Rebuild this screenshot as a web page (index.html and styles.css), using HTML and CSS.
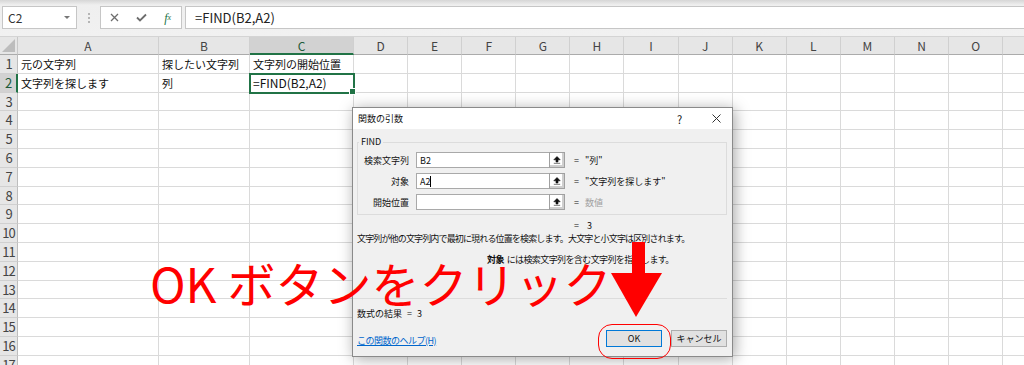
FILE: index.html
```html
<!DOCTYPE html>
<html lang="ja">
<head>
    <meta charset="UTF-8">
    <meta name="viewport" content="width=device-width, initial-scale=1.0">
    <title>関数の引数</title>
    <link rel="stylesheet" href="styles.css">
</head>
<body>
    <div class="app">
        <div class="formula-bar">
            <div class="name-box"><span>C2</span><span class="caret"></span></div>
            <div class="grip"><i></i><i></i><i></i></div>
            <div class="fx-buttons">
                <span class="fx-btn">
                    <svg width="9" height="9" viewBox="0 0 9 9"><path d="M1 1 L8 8 M8 1 L1 8" stroke="#6d6d6d" stroke-width="1.3"/></svg>
                </span>
                <span class="fx-btn">
                    <svg width="11" height="9" viewBox="0 0 11 9"><path d="M1 4.5 L4 7.5 L10 1.5" stroke="#6d6d6d" stroke-width="1.8" fill="none"/></svg>
                </span>
                <span class="fx-btn fx-label">f<sub>x</sub></span>
            </div>
            <div class="formula-input">=FIND(B2,A2)</div>
        </div>

        <div class="sheet" id="sheet"></div>

        <div class="dialog">
            <div class="dialog-title">
                <span class="title-text">関数の引数</span>
                <span class="title-help">?</span>
                <span class="title-close">
                    <svg width="9" height="9" viewBox="0 0 9 9"><path d="M0.5 0.5 L8.5 8.5 M8.5 0.5 L0.5 8.5" stroke="#333" stroke-width="1"/></svg>
                </span>
            </div>
            <div class="dialog-body">
                <fieldset class="args">
                    <legend>FIND</legend>
                    <div class="arg-row">
                        <span class="arg-label">検索文字列</span>
                        <span class="arg-input">B2</span>
                        <span class="ref-btn"><svg width="8" height="8" viewBox="0 0 8 8"><path d="M4 0.5 L0.8 3.8 H3 V6 H5 V3.8 H7.2 Z M0.8 7.3 H7.2" fill="#111" stroke="#111" stroke-width="0.6"/></svg></span>
                        <span class="eq">=</span>
                        <span class="arg-value">"列"</span>
                    </div>
                    <div class="arg-row">
                        <span class="arg-label">対象</span>
                        <span class="arg-input">A2<span class="text-cursor"></span></span>
                        <span class="ref-btn"><svg width="8" height="8" viewBox="0 0 8 8"><path d="M4 0.5 L0.8 3.8 H3 V6 H5 V3.8 H7.2 Z M0.8 7.3 H7.2" fill="#111" stroke="#111" stroke-width="0.6"/></svg></span>
                        <span class="eq">=</span>
                        <span class="arg-value">"文字列を探します"</span>
                    </div>
                    <div class="arg-row">
                        <span class="arg-label">開始位置</span>
                        <span class="arg-input"></span>
                        <span class="ref-btn"><svg width="8" height="8" viewBox="0 0 8 8"><path d="M4 0.5 L0.8 3.8 H3 V6 H5 V3.8 H7.2 Z M0.8 7.3 H7.2" fill="#111" stroke="#111" stroke-width="0.6"/></svg></span>
                        <span class="eq">=</span>
                        <span class="arg-value muted">数値</span>
                    </div>
                </fieldset>
                <div class="func-result"><span class="eq">=</span>3</div>
                <p class="desc">文字列が他の文字列内で最初に現れる位置を検索します。大文字と小文字は区別されます。</p>
                <p class="arg-desc"><b>対象</b>&nbsp;&nbsp;には検索文字列を含む文字列を指定します。</p>
                <div class="separator"></div>
                <div class="formula-result">数式の結果 <span class="eq">=</span> 3</div>
                <div class="dialog-foot">
                    <a class="help-link" href="#">この関数のヘルプ(H)</a>
                    <button class="btn btn-ok">OK</button>
                    <button class="btn">キャンセル</button>
                </div>
            </div>
        </div>

        <div class="note">OK ボタンをクリック</div>
        <svg class="arrow" width="58" height="80" viewBox="0 0 58 80">
            <rect x="24" y="2" width="13" height="32" fill="#ff0000"/>
            <polygon points="3,33 54,33 28,77" fill="#ff0000"/>
        </svg>
        <div class="ring"></div>
    </div>
    <script>
        let sheet = document.getElementById('sheet');
        let letters = 'ABCDEFGHIJKLMNOP'.split('');
        let data = {
            A1: '元の文字列',
            B1: '探したい文字列',
            C1: '文字列の開始位置',
            A2: '文字列を探します',
            B2: '列',
            C2: '=FIND(B2,A2)'
        };

        function addCell(cls, text) {
            let cell = document.createElement('div');
            cell.className = cls;
            if (text) cell.innerText = text;
            sheet.appendChild(cell);
            return cell;
        }

        addCell('corner');
        letters.forEach(function(letter) {
            addCell(letter == 'C' ? 'col-head active' : 'col-head', letter);
        });

        for (let row = 1; row <= 17; row++) {
            addCell(row == 2 ? 'row-head active' : 'row-head', String(row));
            letters.forEach(function(letter) {
                let key = letter + row;
                addCell(key == 'C2' ? 'cell selected' : 'cell', data[key]);
            });
        }
    </script>
</body>
</html>
```

FILE: styles.css
```css
* {
    box-sizing: border-box;
}
body {
    margin: 0;
    font-family: "Noto Sans CJK JP", "Noto Sans", sans-serif;
    background: #fff;
    overflow: hidden;
}
.app {
    position: relative;
    width: 1024px;
    height: 365px;
    overflow: hidden;
}

/* formula bar */
.formula-bar {
    height: 37px;
    display: flex;
    align-items: flex-start;
    padding: 6px 0 0 2px;
    background: linear-gradient(#d6d6d6, #efefef 5px, #f1f1f1);
    border-bottom: 1px solid #d4d4d4;
}
.name-box {
    width: 75px;
    height: 23px;
    display: flex;
    align-items: center;
    justify-content: space-between;
    padding: 0 6px 0 5px;
    background: #fff;
    border: 1px solid #c6c6c6;
    font-size: 12px;
    color: #333;
}
.caret {
    border-left: 3px solid transparent;
    border-right: 3px solid transparent;
    border-top: 3px solid #777;
}
.grip {
    width: 23px;
    height: 23px;
    display: flex;
    flex-direction: column;
    align-items: center;
    justify-content: center;
    gap: 2px;
}
.grip i {
    width: 2px;
    height: 2px;
    background: #b5b5b5;
}
.fx-buttons {
    width: 82px;
    height: 23px;
    display: flex;
    align-items: center;
    background: #fff;
    border: 1px solid #c6c6c6;
}
.fx-btn {
    width: 27px;
    display: flex;
    justify-content: center;
}
.fx-label {
    font-family: "Liberation Serif", serif;
    font-style: italic;
    font-size: 12px;
    color: #217346;
    line-height: 12px;
}
.fx-label sub {
    font-size: 8px;
    vertical-align: -1px;
}
.formula-input {
    flex: 1;
    height: 23px;
    margin-left: 3px;
    padding-left: 9px;
    background: #fff;
    border: 1px solid #c6c6c6;
    border-right: 0;
    font-size: 13px;
    line-height: 21px;
    color: #222;
}

/* sheet */
.sheet {
    display: grid;
    grid-template-columns: 18px 141px 91px 104px repeat(13, 54.1px);
    grid-template-rows: 18px repeat(17, 18.8px);
}
.corner {
    position: relative;
    background: #e6e6e6;
    border-right: 1px solid #c8c8c8;
    border-bottom: 1px solid #ababab;
}
.corner::after {
    content: "";
    position: absolute;
    right: 2px;
    bottom: 2px;
    border-left: 13px solid transparent;
    border-bottom: 13px solid #bdbdbd;
}
.col-head {
    background: #e6e6e6;
    border-right: 1px solid #d0d0d0;
    border-bottom: 1px solid #ababab;
    font-size: 12px;
    line-height: 17px;
    text-align: center;
    color: #444;
}
.col-head.active {
    background: #d2d2d2;
    border-bottom: 2px solid #217346;
    color: #1e5b3a;
}
.row-head {
    background: #e6e6e6;
    border-right: 1px solid #bdbdbd;
    border-bottom: 1px solid #d0d0d0;
    font-size: 13px;
    line-height: 18px;
    text-align: center;
    color: #444;
    letter-spacing: -1px;
}
.row-head.active {
    background: #d2d2d2;
    border-right: 2px solid #217346;
    color: #1e5b3a;
}
.cell {
    border-right: 1px solid #dadada;
    border-bottom: 1px solid #dadada;
    padding: 0 3px;
    font-size: 11px;
    line-height: 18px;
    white-space: nowrap;
    color: #111;
}
.cell.selected {
    position: relative;
    z-index: 1;
    outline: 2px solid #217346;
    outline-offset: -1px;
    font-size: 12px;
}
.cell.selected::after {
    content: "";
    position: absolute;
    right: -3px;
    bottom: -3px;
    width: 5px;
    height: 5px;
    background: #217346;
    border: 1px solid #fff;
}

/* dialog */
.dialog {
    position: absolute;
    z-index: 2;
    left: 352px;
    top: 107px;
    width: 381px;
    height: 250px;
    background: #f0f0f0;
    border: 1px solid #8a8a8a;
    box-shadow: 2px 2px 14px rgba(0, 0, 0, 0.35);
    font-size: 9px;
    color: #111;
}
.dialog-title {
    height: 21px;
    display: flex;
    align-items: center;
    padding-left: 5px;
    background: #fff;
}
.title-text {
    flex: 1;
}
.title-help {
    width: 35px;
    font-size: 11px;
}
.title-close {
    width: 20px;
    display: flex;
}
.dialog-body {
    padding: 0 5px 0 4px;
}
.args {
    margin: 8px 0 0;
    padding: 0 0 4px 0;
    border: 1px solid #dcdcdc;
}
.args legend {
    margin-left: 1px;
    padding: 0 2px;
    font-size: 9px;
    line-height: 10px;
}
.arg-row {
    height: 16px;
    margin-top: 5px;
    display: flex;
    align-items: center;
}
.arg-label {
    width: 51px;
    text-align: right;
    margin-right: 7px;
}
.arg-input {
    width: 133px;
    height: 16px;
    padding-left: 3px;
    display: flex;
    align-items: center;
    background: #fff;
    border: 1px solid #a9a9a9;
    border-right: 0;
}
.text-cursor {
    width: 1px;
    height: 11px;
    background: #000;
}
.ref-btn {
    width: 16px;
    height: 16px;
    display: flex;
    align-items: center;
    justify-content: center;
    background: #fff;
    border: 1px solid #a0a0a0;
    box-shadow: inset -2px -2px 0 #cfcfcf;
}
.eq {
    margin: 0 6px 0 9px;
}
.muted {
    color: #a0a0a0;
}
.func-result {
    margin-top: 6px;
    padding-left: 217px;
    line-height: 10px;
}
.func-result .eq {
    margin: 0 8px 0 0;
}
.desc {
    margin: 3px 0 0;
    line-height: 10px;
    letter-spacing: -0.85px;
}
.arg-desc {
    margin: 11px 0 0;
    padding-left: 130px;
    line-height: 10px;
    letter-spacing: -0.6px;
}
.separator {
    height: 1px;
    margin: 33px 0 0 -4px;
    background: #dcdcdc;
}
.formula-result {
    margin-top: 10px;
    line-height: 10px;
}
.formula-result .eq {
    margin: 0 3px;
}
.dialog-foot {
    margin-top: 11px;
    display: flex;
    align-items: center;
    gap: 9px;
}
.help-link {
    flex: 1;
    color: #0066cc;
    margin-top: 4px;
    letter-spacing: -0.5px;
}
.btn {
    width: 56px;
    height: 17px;
    padding: 0;
    background: #e1e1e1;
    border: 1px solid #adadad;
    font-family: inherit;
    font-size: 9px;
    color: #111;
}
.btn-ok {
    border-color: #0078d7;
}

/* annotation */
.note {
    position: absolute;
    z-index: 3;
    left: 150px;
    top: 258px;
    font-size: 48px;
    line-height: 48px;
    color: #ff0000;
    white-space: nowrap;
}
.arrow {
    position: absolute;
    z-index: 3;
    left: 608px;
    top: 240px;
}
.ring {
    position: absolute;
    z-index: 3;
    left: 598px;
    top: 324px;
    width: 73px;
    height: 35px;
    border: 1px solid #ff0000;
    border-radius: 14px;
}
```
